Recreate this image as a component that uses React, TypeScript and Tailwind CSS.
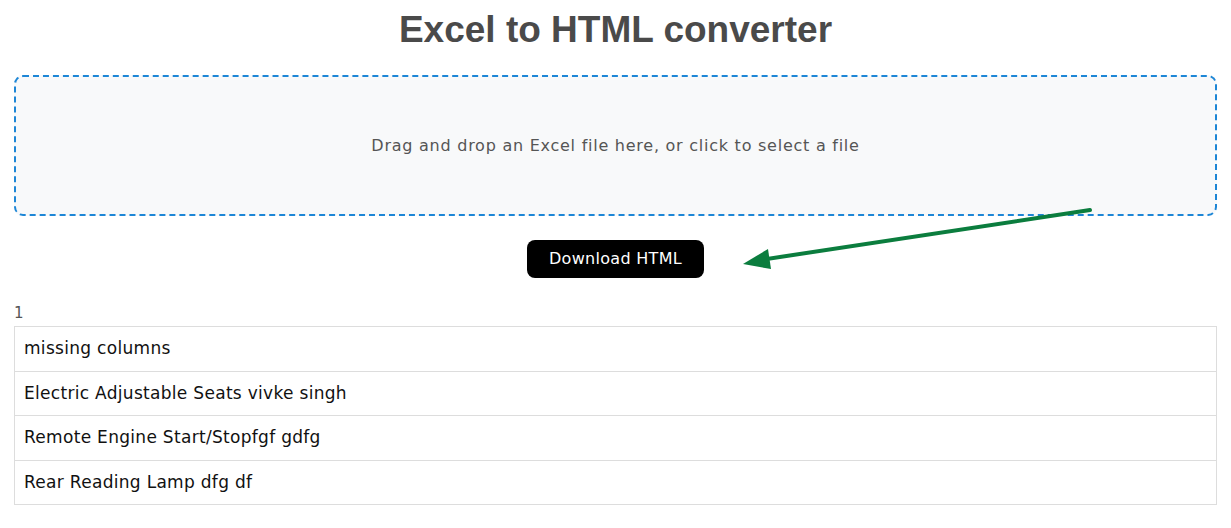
import React from "react";

const rows = [
  "missing columns",
  "Electric Adjustable Seats vivke singh",
  "Remote Engine Start/Stopfgf gdfg",
  "Rear Reading Lamp dfg df",
];

export default function App() {
  return (
    <div className="relative min-h-[528px] bg-white px-[14px] text-[#222]" style={{ fontFamily: '"DejaVu Sans", "Noto Sans", sans-serif' }}>
      <h1
        className="pt-[10px] text-center text-[37px] font-bold leading-[40px] text-[#4a4a4a]"
        style={{ fontFamily: '"Liberation Sans", Arial, sans-serif' }}
      >
        Excel to HTML converter
      </h1>
      <div className="mt-[25px] flex h-[141px] items-center justify-center rounded-[9px] border-2 border-dashed border-[#1d86d6] bg-[#f8f9fa]">
        <p className="text-[16px] tracking-[0.75px] text-[#555]">
          Drag and drop an Excel file here, or click to select a file
        </p>
      </div>
      <div className="mt-[24px] flex justify-center">
        <button className="h-[38px] rounded-[8px] bg-black px-[22px] text-[16px] tracking-[0.3px] text-white">
          Download HTML
        </button>
      </div>
      <div className="mt-[23px] text-[15px] leading-[25px] text-[#555]">1</div>
      <table className="w-full border-collapse">
        <tbody>
          {rows.map((r) => (
            <tr key={r}>
              <td className="h-[44.5px] border border-[#ddd] px-[9px] text-[17px] tracking-[0.3px] text-[#111]">
                {r}
              </td>
            </tr>
          ))}
        </tbody>
      </table>
      <svg className="pointer-events-none absolute left-0 top-0" width="1231" height="528">
        <line x1="1090" y1="210" x2="760" y2="260" stroke="#0b7d3e" strokeWidth="4" strokeLinecap="round" />
        <polygon points="743,264 768,249 771,269" fill="#0b7d3e" />
      </svg>
    </div>
  );
}
